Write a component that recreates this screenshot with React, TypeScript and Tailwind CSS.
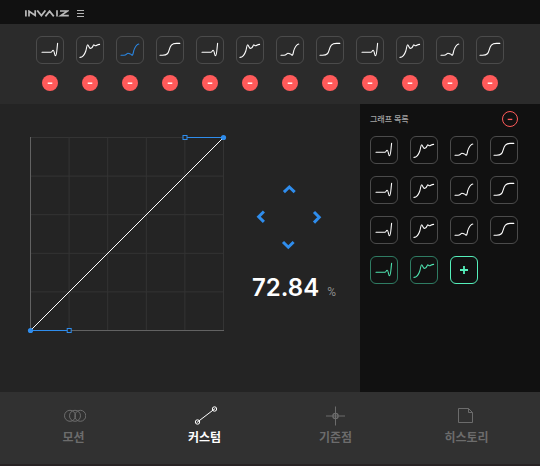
import React from "react";
import { clsx } from "clsx";

const CURVES = [
  "M6 16.3H14.8C16 16.3 16.2 14.2 17.2 14.2C18.3 14.2 18.5 19.7 19.5 19.7C20.8 19.7 20.9 13 21.6 7.2",
  "M4 21.4C7.6 21.4 9 17.4 9.8 15C10.6 12.6 10.8 8.7 11.6 8.7C12.6 8.7 12.9 12.4 14.6 12.4C17 12.4 16.9 8.8 17.8 8.8C18.5 8.8 18.4 10 19.4 9.8C20.8 9.5 21.4 8.4 23.6 8.4",
  "M5 19.3H8C10.4 19.3 10.6 17.3 12 17.3C13.6 17.3 13.8 18.2 14.8 18.2C15.5 18.2 15.8 19.4 16.3 19.2C17.3 18.6 17.2 15.8 18.2 13.4C19.4 10.3 20.6 8.3 22.8 8",
  "M4 19.3H6.5C11.5 19.3 12.3 17 13.2 13.8C14.3 9.7 15.5 7.4 20.5 7.4H23.8",
];

const TOOLBAR = Array.from({ length: 12 }, (_, i) => i);
const SAVED = Array.from({ length: 12 }, (_, i) => i);

type Tone = "plain" | "active" | "fresh";

function CurveTile({ curve, tone = "plain", label }: { curve: number; tone?: Tone; label: string }) {
  return (
    <button
      type="button"
      aria-label={label}
      className={clsx(
        "flex size-7 items-center justify-center rounded-md border",
        tone === "plain" && "border-[#4b4b4b] text-white",
        tone === "active" && "border-[#4b4b4b] text-[#2a86e2]",
        tone === "fresh" && "border-[#2f7c63] text-[#4fe3b0]",
      )}
    >
      <svg viewBox="0 0 28 28" className="size-7 shrink-0" fill="none" stroke="currentColor" strokeWidth="1.1" strokeLinecap="round" strokeLinejoin="round">
        <path d={CURVES[curve]} />
      </svg>
    </button>
  );
}

function Logo() {
  return (
    <svg viewBox="0 0 44 7" className="h-[7px] w-11" fill="none" stroke="#b9b9b9" strokeWidth="1.7" role="img" aria-label="INVAIZ">
      <path d="M0.9 0.2V6.4M4 6.4V1.2L10.2 5.4V0.2M12.2 0.4L16.4 5.6L20.4 0.4M20.4 6.4L24.6 1.1L28.8 6.4M32 0.2V6.4M35 1H42.6L35.8 5.6H43.8" />
    </svg>
  );
}

function Header() {
  return (
    <header className="flex h-6 items-center gap-2 bg-[#111111] pt-0.5 pl-[25px]">
      <Logo />
      <button type="button" aria-label="메뉴" className="flex w-[7px] flex-col gap-0.5">
        <span className="h-px bg-[#b4b4b4]" />
        <span className="h-px bg-[#b4b4b4]" />
        <span className="h-px bg-[#b4b4b4]" />
      </button>
    </header>
  );
}

function Toolbar() {
  return (
    <section className="flex h-20 justify-center gap-3 bg-[#2b2b2b] pt-3">
      {TOOLBAR.map((i) => (
        <div key={i} className="flex flex-col items-center gap-[11px]">
          <CurveTile curve={i % 4} tone={i === 2 ? "active" : "plain"} label={`그래프 ${i + 1}`} />
          <button type="button" aria-label={`그래프 ${i + 1} 삭제`} className="flex size-4 items-center justify-center rounded-full bg-[#ff5a5a]">
            <svg viewBox="0 0 16 16" className="size-4" stroke="#ffffff" strokeWidth="1.4">
              <path d="M5.7 8.2H10.3" />
            </svg>
          </button>
        </div>
      ))}
    </section>
  );
}

function Chart() {
  const steps = [0, 1, 2, 3, 4, 5].map((n) => 4.5 + n * 38.6);
  return (
    <svg viewBox="0 0 202 202" className="size-[202px] shrink-0" fill="none" role="img" aria-label="커스텀 그래프">
      <g stroke="#343434">
        {steps.map((p) => (
          <path key={p} d={`M${p} 4.5V197.5M4.5 ${p}H197.5`} />
        ))}
      </g>
      <path d="M4.5 4V197.5H198" stroke="#626262" />
      <path d="M4.5 197.5L197.5 4.5" stroke="#ffffff" />
      <path d="M4.5 197.5H41M161 4.5H197.5" stroke="#2f8ded" />
      <circle cx="4.5" cy="197.5" r="2.6" fill="#2f8ded" />
      <circle cx="197.5" cy="4.5" r="2.6" fill="#2f8ded" />
      <rect x="41.2" y="195.5" width="4" height="4" fill="#242424" stroke="#2f8ded" />
      <rect x="157" y="2.5" width="4" height="4" fill="#242424" stroke="#2f8ded" />
    </svg>
  );
}

const ARROWS = [
  { label: "위로", place: "col-start-2 row-start-1", d: "M3.9 11.2L9.3 6L14.7 11.2" },
  { label: "왼쪽으로", place: "col-start-1 row-start-2", d: "M11.9 2.5L6.7 7.7L11.9 12.9" },
  { label: "오른쪽으로", place: "col-start-3 row-start-2", d: "M6 3L11.2 8.3L6 13.6" },
  { label: "아래로", place: "col-start-2 row-start-3", d: "M3 5L8.3 10.2L13.6 5" },
];

function Pad() {
  return (
    <div className="grid w-[72px] grid-cols-3 gap-3">
      {ARROWS.map((a) => (
        <button key={a.label} type="button" aria-label={a.label} className={clsx("size-4", a.place)}>
          <svg viewBox="0 0 16 16" className="size-4" fill="none" stroke="#2f8ded" strokeWidth="3">
            <path d={a.d} />
          </svg>
        </button>
      ))}
    </div>
  );
}

function Editor() {
  return (
    <section className="col-span-2 flex bg-[#242424] pt-[29px] pl-[26px]">
      <Chart />
      <div className="flex flex-1 flex-col gap-[19px] pt-12 pl-6">
        <Pad />
        <p className="flex items-baseline gap-2 font-['Inter',sans-serif] text-2xl leading-8 font-semibold text-white">
          72.84
          <span className="font-['Roboto',sans-serif] text-xs font-normal text-[#8b8b8b]">%</span>
        </p>
      </div>
    </section>
  );
}

function Library() {
  return (
    <aside className="bg-[#111111] pt-[7px] pr-[22px] pl-2.5">
      <div className="flex h-4 items-center justify-between">
        <h2 className="text-[8px] leading-4 font-medium text-[#a3a3a3]">그래프 목록</h2>
        <button type="button" aria-label="목록에서 삭제" className="flex size-4 items-center justify-center">
          <svg viewBox="0 0 16 16" className="size-4" fill="none" stroke="#ff5a5a">
            <circle cx="8" cy="8" r="7.5" />
            <path d="M5.7 8.4H10.3" strokeWidth="1.3" />
          </svg>
        </button>
      </div>
      <div className="mt-[9px] grid grid-cols-4 gap-3">
        {SAVED.map((i) => (
          <CurveTile key={i} curve={i % 4} label={`저장된 그래프 ${i + 1}`} />
        ))}
        <CurveTile curve={0} tone="fresh" label="새 그래프 1" />
        <CurveTile curve={1} tone="fresh" label="새 그래프 2" />
        <button type="button" aria-label="그래프 추가" className="flex size-7 items-center justify-center rounded-md border border-[#55f0bb] text-[#55f0bb]">
          <svg viewBox="0 0 8 8" className="size-2" stroke="currentColor" strokeWidth="1.8">
            <path d="M0 4H8M4 0V8" />
          </svg>
        </button>
      </div>
    </aside>
  );
}

function NavItem({ label, active, children }: { label: string; active?: boolean; children: React.ReactNode }) {
  return (
    <a
      href="#"
      aria-current={active ? "page" : undefined}
      className={clsx("flex w-[131px] flex-col items-center", active ? "text-white" : "text-[#6c6c6c]")}
    >
      <svg viewBox="0 0 24 20" className="h-5 w-6" fill="none" stroke="currentColor">
        {children}
      </svg>
      <span className="mt-px text-xs leading-5 font-bold">{label}</span>
    </a>
  );
}

function Nav() {
  return (
    <nav className="flex h-[72px] justify-center bg-[#313131] pt-3.5">
      <NavItem label="모션">
        <circle cx="8" cy="9.8" r="5.5" />
        <circle cx="13" cy="9.8" r="5.5" />
        <circle cx="18.3" cy="9.8" r="5.5" />
      </NavItem>
      <NavItem label="커스텀" active>
        <circle cx="4.5" cy="16" r="2.2" />
        <circle cx="21.5" cy="3" r="2.2" />
        <path d="M3.7 16.6L22.3 2.4" />
      </NavItem>
      <NavItem label="기준점">
        <path d="M11.5 0.5V19.5M2 10H21" />
        <circle cx="11.5" cy="10" r="2.6" strokeWidth="1.3" />
      </NavItem>
      <NavItem label="히스토리">
        <path d="M3.5 2.5H13.5L17.5 6.5V16.5H3.5ZM13.5 2.5V6.5H17.5" />
      </NavItem>
    </nav>
  );
}

export default function App() {
  return (
    <div className="flex min-h-screen flex-col bg-[#282324] font-['Noto_Sans_CJK_KR',sans-serif]">
      <Header />
      <Toolbar />
      <main className="grid min-h-72 grid-cols-3">
        <Editor />
        <Library />
      </main>
      <Nav />
    </div>
  );
}
